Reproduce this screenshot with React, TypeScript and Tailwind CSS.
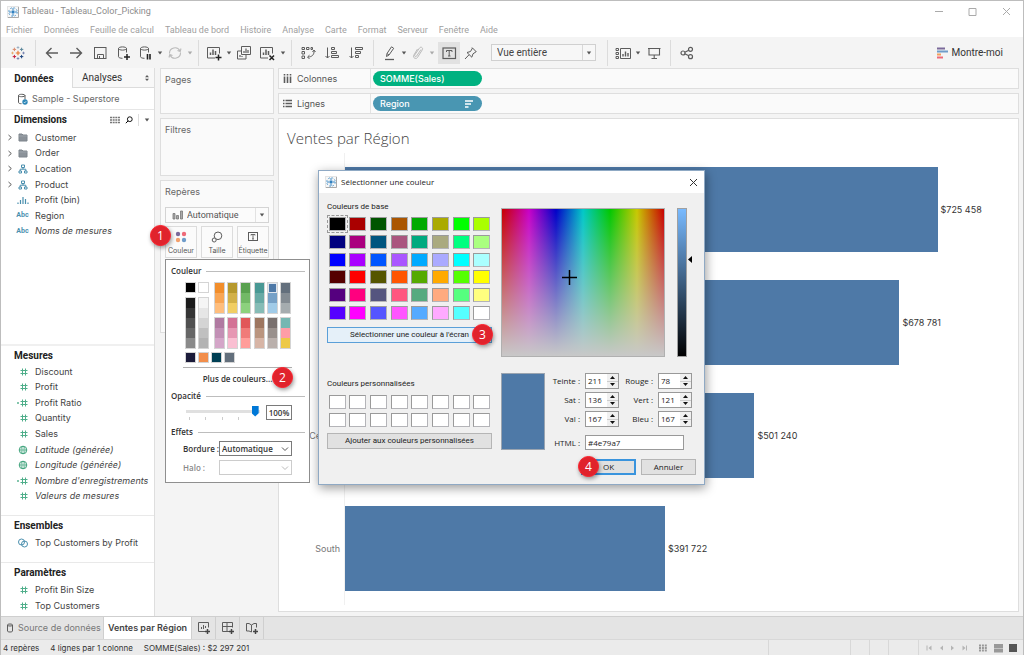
import React from "react";

/* ---------- icons ---------- */

type IconProps = { children: React.ReactNode; className?: string; w?: number; h?: number };

function Icon({ children, className = "text-[#5c5c5c]", w = 16, h = 16 }: IconProps) {
  return (
    <svg
      width={w}
      height={h}
      viewBox={`0 0 ${w} ${h}`}
      fill="none"
      stroke="currentColor"
      strokeWidth="1"
      className={`shrink-0 ${className}`}
      aria-hidden="true"
    >
      {children}
    </svg>
  );
}

function Plus({ x, y, r, c, s = 1 }: { x: number; y: number; r: number; c: string; s?: number }) {
  return <path d={`M${x - r} ${y}H${x + r}M${x} ${y - r}V${y + r}`} stroke={c} strokeWidth={s} />;
}

function Logo() {
  return (
    <Icon w={14} h={14}>
      <Plus x={7} y={7} r={2.2} c="#e8762d" s={1.1} />
      <Plus x={3.4} y={3.4} r={1.7} c="#d98a6c" />
      <Plus x={10.6} y={3.4} r={1.7} c="#5b879b" />
      <Plus x={3.4} y={10.6} r={1.7} c="#c5203f" />
      <Plus x={10.6} y={10.6} r={1.7} c="#1f457e" />
      <Plus x={7} y={1.5} r={1.3} c="#8fa6bd" s={0.8} />
      <Plus x={7} y={12.5} r={1.3} c="#6b77a8" s={0.8} />
      <Plus x={1.5} y={7} r={1.3} c="#e8a15d" s={0.8} />
      <Plus x={12.5} y={7} r={1.3} c="#6b77a8" s={0.8} />
    </Icon>
  );
}

function AppIcon() {
  return (
    <Icon w={12} h={12}>
      <rect x="0.5" y="0.5" width="11" height="11" fill="#f7f7f7" stroke="#e4e4e4" />
      <path d="M11.5 1V11.5H1" stroke="#aaa" />
      <path d="M6 2v8M2 6h8" stroke="#3c8ac6" strokeWidth="1" />
      <circle cx="6" cy="6" r="4.300" stroke="#5c9fd0" strokeWidth="1" strokeDasharray="1.800 1.577" />
      <circle cx="6" cy="6" r="2.300" stroke="#8fbcdf" strokeWidth="0.700" strokeDasharray="1 0.800" />
      <circle cx="6" cy="6" r="1.200" fill="#2f7fc0" stroke="none" />
    </Icon>
  );
}

function Caret({ className = "text-[#555]" }: { className?: string }) {
  return (
    <Icon w={6} h={4} className={className}>
      <path d="M0.8 0.5H5.2L3 3.5Z" fill="currentColor" stroke="none" />
    </Icon>
  );
}

const cylinder = "M2.5 3.5v8.2c0 .9 1.8 1.6 4 1.6M10.5 3.5v4M2.5 3.5c0-.9 1.8-1.6 4-1.6s4 .7 4 1.6-1.8 1.6-4 1.6-4-.7-4-1.6Z";
const miniChart = "M4.5 10V7.5M7 10V4.5M9.5 10V6";

const icons = {
  back: <path d="M14 8H3M7.500 3L2.500 8l5 5" strokeWidth="1.400" />,
  forward: <path d="M2 8h11M8.500 3l5 5-5 5" strokeWidth="1.400" />,
  save: (
    <>
      <rect x="2.500" y="2.500" width="11.500" height="11" />
      <path d="M5.500 13.500v-4h6v4M7.500 13v-2" />
    </>
  ),
  dbPlus: (
    <>
      <path d={cylinder} />
      <path d="M8 12h6M11 9v6" stroke="#222" strokeWidth="1.500" />
    </>
  ),
  dbPause: (
    <>
      <path d={cylinder} />
      <path d="M9.500 9v5.500M12 9v5.500" stroke="#222" strokeWidth="1.600" />
    </>
  ),
  refresh: <path d="M2.500 8.500A5.500 5.500 0 0 1 13 6M13.500 7.500A5.500 5.500 0 0 1 3 10M14 3.500L13.200 6.500 10.500 5.500M2 12.500L2.800 9.500 5.500 10.500" strokeWidth="1.100" />,
  chartPlus: (
    <>
      <path d="M9 13H1.500V2.500H13.500V8.500" />
      <path d={miniChart} strokeWidth="1.500" />
      <path d="M9.500 12.500h6M12.500 9.500v6" stroke="#222" strokeWidth="1.500" />
    </>
  ),
  duplicate: (
    <>
      <path d="M5.500 1.500H14.500V9.500H5.500ZM5.500 6H1.500V14H10V9.500" />
      <path d="M8 8V6M10 8V3.500M12 8V5M4 12V10M6 12v-1" strokeWidth="1.200" />
    </>
  ),
  chartX: (
    <>
      <path d="M9 13H1.500V2.500H13.500V8.500" />
      <path d={miniChart} strokeWidth="1.500" />
      <path d="M10.500 10.500l4.500 4.500M15 10.500l-4.500 4.500" stroke="#222" strokeWidth="1.500" />
    </>
  ),
  swap: (
    <>
      <path d="M2 2.500h2.500v2H2ZM6.500 2.500H9v2H6.500ZM11 2.500h1.500v2H11ZM2 6.500h2.500v2.500H2ZM2 11h2.500v2.500H2Z" />
      <path d="M14 5.500c.5 4-2 6.500-6 6.500M12.500 7L14 5l1.500 2M9.500 10.200L7.500 12l2 2" />
    </>
  ),
  sortAsc: (
    <path d="M3.500 2.500V13M1.500 11l2 2 2-2M7.500 2.500h3v2h-3ZM7.500 6.500h5v2h-5ZM7.500 10.500h7v2h-7Z" />
  ),
  sortDesc: (
    <path d="M3.500 2.500V13M1.500 11l2 2 2-2M7.500 2.500h7v2h-7ZM7.500 6.500h5v2h-5ZM7.500 10.500h3v2h-3Z" />
  ),
  pen: (
    <>
      <path d="M4.500 11.500L5 8.500 9.500 1.800l2.200 1.500L7 10ZM5 8.500L7 10" />
      <path d="M3 14.500H12" strokeWidth="1.300" />
    </>
  ),
  clip: (
    <path d="M11 4.500L6.500 11.200c-.8 1.200-2.500 0-1.800-1.200L9.500 3c1.300-1.800 4-.2 2.800 1.800L7.500 12.500c-1.500 2.200-5 .3-3.800-2.200L7.500 4" />
  ),
  textBox: (
    <>
      <rect x="2" y="3" width="12.500" height="10.500" strokeWidth="1.200" />
      <path d="M5.500 7V5.500h5.500V7M8.200 5.500V11M7 11h2.500" />
    </>
  ),
  pin: (
    <path d="M9 2.500l4.500 4.500M9.500 3L7.500 6.500 4 7.500l4.800 4.700L10 8.800l3-2M6 9.800L2 14" />
  ),
  cards: (
    <>
      <path d="M1 3.500h2.500v2H1ZM1 7.500h2.500v2H1ZM1 11.500h2.500v2H1ZM5.500 3.500H15.500V13.500H5.500Z" />
      <path d="M8 11.500V9M10.500 11.500V6.500M13 11.500V8" strokeWidth="1.400" />
    </>
  ),
  present: <path d="M2 3.500H14.500M3 3.500v6.500H13.500V3.500M8.200 10v3.500M5.500 13.500h5.500" strokeWidth="1.100" />,
  share: (
    <>
      <circle cx="4" cy="8" r="2" strokeWidth="1.200" />
      <circle cx="11.500" cy="4.300" r="2" strokeWidth="1.200" />
      <circle cx="11.500" cy="11.700" r="2" strokeWidth="1.200" />
      <path d="M5.800 7.200l4-2M5.800 8.800l4 2" strokeWidth="1.200" />
    </>
  ),
};

/* ---------- toolbar ---------- */

function Tool({ name, label, cell = "w-6", tone }: { name: keyof typeof icons; label: string; cell?: string; tone?: string }) {
  return (
    <button type="button" aria-label={label} className={`flex h-[22px] shrink-0 items-center justify-center ${cell}`}>
      <Icon className={tone}>{icons[name]}</Icon>
    </button>
  );
}

function DropCaret({ label, tone }: { label: string; tone?: string }) {
  return (
    <button type="button" aria-label={label} className="flex h-[22px] w-2 shrink-0 items-center justify-center">
      <Caret className={tone} />
    </button>
  );
}

function Sep({ className = "mx-1" }: { className?: string }) {
  return <div className={`h-[26px] w-px shrink-0 bg-[#dcdcdc] ${className}`} />;
}

function Toolbar() {
  return (
    <div className="flex h-[31px] items-center bg-[#f4f4f4] font-[Roboto,'Noto_Sans',sans-serif] text-[10px]">
      <div className="flex w-[34px] justify-center">
        <Logo />
      </div>
      <Sep className="mr-1" />
      <Tool name="back" label="Annuler l'action" />
      <Tool name="forward" label="Rétablir" />
      <Tool name="save" label="Enregistrer" />
      <Tool name="dbPlus" label="Nouvelle source de données" />
      <Tool name="dbPause" label="Suspendre les mises à jour" cell="w-5" />
      <DropCaret label="Options de mise à jour" />
      <Tool name="refresh" label="Actualiser" cell="w-[22px]" tone="text-[#bbb]" />
      <DropCaret label="Options d'actualisation" tone="text-[#aaa]" />
      <Sep className="mx-1" />
      <Tool name="chartPlus" label="Nouvelle feuille" cell="w-[22px]" />
      <DropCaret label="Options de nouvelle feuille" />
      <Tool name="duplicate" label="Dupliquer" cell="w-[22px]" />
      <Tool name="chartX" label="Effacer" />
      <DropCaret label="Options d'effacement" />
      <Sep className="mx-1" />
      <Tool name="swap" label="Permuter" />
      <Tool name="sortAsc" label="Tri croissant" />
      <Tool name="sortDesc" label="Tri décroissant" />
      <Sep className="ml-[5px] mr-[6px]" />
      <Tool name="pen" label="Surligner" cell="w-5" />
      <DropCaret label="Options de surlignage" />
      <Tool name="clip" label="Grouper" cell="w-5" tone="text-[#bbb]" />
      <DropCaret label="Options de groupe" tone="text-[#aaa]" />
      <button type="button" aria-label="Étiquettes de repère" className="ml-[2px] flex h-[22px] w-[22px] shrink-0 items-center justify-center bg-[#e2e2e2]">
        <Icon>{icons.textBox}</Icon>
      </button>
      <Tool name="pin" label="Fixer les axes" cell="w-[22px]" />
      <div className="relative ml-[9px] w-[105px] shrink-0">
        <select aria-label="Ajuster" className="h-[17px] w-full appearance-none border border-[#d0d0d0] bg-[#f7f7f7] pl-[5px] text-[10px] leading-[15px] text-[#444]">
          <option>Vue entière</option>
        </select>
        <span className="pointer-events-none absolute inset-y-px right-px flex w-[13px] items-center justify-center border-l border-[#d8d8d8]">
          <Caret />
        </span>
      </div>
      <Sep className="ml-[11px] mr-1" />
      <Tool name="cards" label="Afficher/Masquer les fiches" cell="w-[22px]" />
      <DropCaret label="Options de fiches" />
      <Tool name="present" label="Mode Présentation" />
      <Sep className="mx-1" />
      <Tool name="share" label="Partager" />
      <button type="button" className="ml-auto mr-5 flex items-center gap-1 text-[10px] text-[#333]">
        <Icon w={11} h={12}>
          <path d="M0 1.500H8" stroke="#7b6a9a" strokeWidth="2" />
          <path d="M0 4.500H11" stroke="#6f9cc9" strokeWidth="2" />
          <path d="M0 7.500H4" stroke="#f3a05c" strokeWidth="2" />
          <path d="M0 10.500H6" stroke="#ee6a78" strokeWidth="2" />
        </Icon>
        Montre-moi
      </button>
    </div>
  );
}

/* ---------- data pane ---------- */

type FieldKind = "folder" | "hier" | "bin" | "abc" | "num" | "calc" | "globe" | "set";

function FieldIcon({ kind }: { kind: FieldKind }) {
  if (kind === "abc") return <span className="font-[Roboto,sans-serif] text-[7px] font-bold text-[#4a8fae]">Abc</span>;
  if (kind === "folder")
    return (
      <Icon w={10} h={9}>
        <path d="M1 1h3l1 1h4v6H1Z" fill="#8b9299" stroke="#7d848b" />
        <path d="M1 3H9" stroke="#a9afb5" strokeWidth="0.600" />
      </Icon>
    );
  if (kind === "hier")
    return (
      <Icon w={10} h={10} className="text-[#4a8fae]">
        <path d="M3.500 1h3v2.500h-3ZM1 7h2.500v2H1ZM6.500 7H9v2H6.500ZM5 3.500V5.200M2.200 7V5.200H7.800V7" />
      </Icon>
    );
  if (kind === "bin")
    return (
      <Icon w={12} h={10} className="text-[#4a8fae]">
        <path d="M1 9V7.500M3.500 9V5M6 9V2M8.500 9V4M11 9V7.500" strokeWidth="1.200" />
      </Icon>
    );
  if (kind === "globe")
    return (
      <Icon w={10} h={10} className="text-[#3fa37c]">
        <circle cx="5" cy="5" r="3.800" />
        <path d="M1 5H9M5 1V9" strokeWidth="0.700" />
        <ellipse cx="5" cy="5" rx="2" ry="3.800" strokeWidth="0.700" />
      </Icon>
    );
  if (kind === "set")
    return (
      <Icon w={12} h={10} className="text-[#4a8fae]">
        <circle cx="4.500" cy="4" r="3" />
        <circle cx="7.500" cy="6" r="3" />
      </Icon>
    );
  return (
    <Icon w={12} h={8} className="text-[#4fae8a]">
      <path d="M5.500 0.500V7.500M8.500 0.500V7.500M3.500 2.500H10.500M3.500 5.500H10.500" />
      {kind === "calc" && <path d="M0 3.500H2M0 4.500H2" strokeWidth="0.700" />}
    </Icon>
  );
}

type FieldDef = { name: string; kind: FieldKind; open?: boolean; italic?: boolean };

function Field({ name, kind, open, italic }: FieldDef) {
  return (
    <li className="flex flex-1 items-center">
      <span className="flex w-3 shrink-0 justify-end">
        {open && (
          <Icon w={6} h={7}>
            <path d="M1.500 1L4.300 3.500 1.500 6" />
          </Icon>
        )}
      </span>
      <span className="flex w-[22px] shrink-0 justify-center pr-[3px]">
        <FieldIcon kind={kind} />
      </span>
      <span className={`whitespace-nowrap leading-3 text-[#444] ${italic ? "italic" : ""}`}>{name}</span>
    </li>
  );
}

const dimensions: FieldDef[] = [
  { name: "Customer", kind: "folder", open: true },
  { name: "Order", kind: "folder", open: true },
  { name: "Location", kind: "hier", open: true },
  { name: "Product", kind: "hier", open: true },
  { name: "Profit (bin)", kind: "bin" },
  { name: "Region", kind: "abc" },
  { name: "Noms de mesures", kind: "abc", italic: true },
];

const measures: FieldDef[] = [
  { name: "Discount", kind: "num" },
  { name: "Profit", kind: "num" },
  { name: "Profit Ratio", kind: "calc" },
  { name: "Quantity", kind: "num" },
  { name: "Sales", kind: "num" },
  { name: "Latitude (générée)", kind: "globe", italic: true },
  { name: "Longitude (générée)", kind: "globe", italic: true },
  { name: "Nombre d'enregistrements", kind: "calc", italic: true },
  { name: "Valeurs de mesures", kind: "num", italic: true },
];

function PaneTitle({ children }: { children: React.ReactNode }) {
  return <h2 className="pl-[13px] font-[Roboto,'Noto_Sans',sans-serif] text-[10px] font-bold leading-5 text-[#222]">{children}</h2>;
}

function DataPane() {
  return (
    <aside className="flex w-[154px] shrink-0 flex-col border-r border-[#dedede] bg-white">
      <div className="flex h-5 font-[Roboto,'Noto_Sans',sans-serif] text-[10px]">
        <button type="button" className="w-[71px] pr-[5px] text-center font-bold text-[#222]">
          Données
        </button>
        <button type="button" className="flex flex-1 items-center justify-between border-b border-l border-[#dcdcdc] bg-[#f8f8f8] pl-[9px] pr-1 text-[#333]">
          Analyses
          <Icon w={6} h={8}>
            <path d="M1 3.200L3 1l2 2.200ZM1 4.800L3 7l2-2.200Z" fill="currentColor" stroke="none" />
          </Icon>
        </button>
      </div>
      <div className="flex h-[22px] items-center gap-[3px] border-b border-[#e6e6e6] pl-4 text-[#666]">
        <Icon w={12} h={12}>
          <path d="M1.500 2.500v7c0 .7 1.300 1.200 3 1.200M8 2.500v4M1.500 2.500c0-.7 1.400-1.200 3.200-1.200S8 1.800 8 2.500 6.500 3.700 4.700 3.700 1.500 3.200 1.500 2.500Z" />
          <circle cx="8" cy="9" r="2.700" fill="#2f87b7" stroke="none" />
          <path d="M6.800 9l.9.9 1.500-1.700" stroke="#fff" strokeWidth="0.700" />
        </Icon>
        Sample - Superstore
      </div>
      <div className="flex items-center pr-[4px]">
        <PaneTitle>Dimensions</PaneTitle>
        <Icon w={10} h={8} className="ml-auto text-[#777]">
          <path d="M0 1.500H10M0 4H10M0 6.500H10" strokeWidth="1.500" strokeDasharray="2 0.660" />
        </Icon>
        <Icon w={8} h={8} className="ml-[5px]">
          <circle cx="4.800" cy="3.200" r="2.400" strokeWidth="0.900" />
          <path d="M3.100 4.900L0.800 7.200" strokeWidth="1" />
        </Icon>
        <span className="ml-[5px] mr-[5px] h-[12px] w-px bg-[#ddd]" />
        <Caret />
      </div>
      <ul className="flex h-[109px] flex-col">
        {dimensions.map((f) => (
          <Field key={f.name} {...f} />
        ))}
      </ul>
      <div className="mt-auto border-t-2 border-[#f0f0f0]">
        <PaneTitle>Mesures</PaneTitle>
        <ul className="-mt-[2px] flex h-[140px] flex-col">
          {measures.map((f) => (
            <Field key={f.name} {...f} />
          ))}
        </ul>
      </div>
      <div className="mt-[11px] border-t border-[#e9e9e9]">
        <PaneTitle>Ensembles</PaneTitle>
        <ul className="-mt-px flex h-4 flex-col">
          <Field name="Top Customers by Profit" kind="set" />
        </ul>
      </div>
      <div className="mt-[11px] border-t border-[#e9e9e9]">
        <PaneTitle>Paramètres</PaneTitle>
        <ul className="-mt-px mb-[2px] flex h-8 flex-col">
          <Field name="Profit Bin Size" kind="num" />
          <Field name="Top Customers" kind="num" />
        </ul>
      </div>
    </aside>
  );
}

/* ---------- cards ---------- */

function Badge({ n, className }: { n: number; className: string }) {
  return (
    <span className={`absolute z-20 flex h-[21px] w-[21px] items-center justify-center rounded-full border border-[#ff1f2a] bg-[#e0232c] font-['Open_Sans',sans-serif] text-[12px] font-normal leading-none text-white shadow-[1px_2px_4px_rgba(0,0,0,0.4)] ${className}`}>
      {n}
    </span>
  );
}

function MarkButton({ label, children }: { label: string; children: React.ReactNode }) {
  return (
    <button type="button" className="flex h-8 w-8 flex-col items-center justify-between border border-[#dcdcdc] bg-[#fbfbfb] pb-px pt-1 text-[7px] leading-[10px] text-[#555]">
      {children}
      {label}
    </button>
  );
}

function Cards() {
  return (
    <div className="flex w-[119px] shrink-0 flex-col gap-1 pl-[5px] leading-3 text-[#666]">
      <section className="h-[46px] border border-[#dedede] bg-[#fafafa] px-1 pt-[5px]">Pages</section>
      <section className="h-[58px] border border-[#dedede] bg-[#fafafa] px-1 pt-[5px]">Filtres</section>
      <section className="relative h-[153px] border border-[#dedede] bg-[#fafafa] px-1 pt-[5px]">
        Repères
        <div className="relative mt-[9px]">
          <select aria-label="Type de repère" className="h-4 w-full appearance-none border border-[#d4d4d4] bg-[#fbfbfb] pl-[21px] font-[Roboto,sans-serif] text-[9px] leading-[14px] text-[#555]">
            <option>Automatique</option>
          </select>
          <span className="pointer-events-none absolute inset-y-0 left-[7px] flex items-center">
            <Icon w={11} h={10} className="text-[#777]">
              <path d="M1 3.500h2V9H1ZM4.500 5.500h2V9h-2ZM8.500 1h2v8h-2Z" fill="#aaa" strokeWidth="0.800" />
            </Icon>
          </span>
          <span className="pointer-events-none absolute inset-y-px right-px flex w-[13px] items-center justify-center border-l border-[#e2e2e2]">
            <Caret />
          </span>
        </div>
        <div className="mt-[3px] flex justify-between">
          <MarkButton label="Couleur">
            <Icon w={12} h={12}>
              <circle cx="3" cy="3" r="2.200" fill="#7b6a9a" stroke="none" />
              <circle cx="9" cy="3" r="2.200" fill="#ee6a78" stroke="none" />
              <circle cx="3" cy="9" r="2.200" fill="#f3a06c" stroke="none" />
              <circle cx="9" cy="9" r="2.200" fill="#6f9cc9" stroke="none" />
            </Icon>
          </MarkButton>
          <MarkButton label="Taille">
            <Icon w={12} h={12}>
              <circle cx="7" cy="4.800" r="3.800" />
              <circle cx="3.200" cy="9" r="2" fill="#fbfbfb" />
            </Icon>
          </MarkButton>
          <MarkButton label="Étiquette">
            <Icon w={12} h={12}>
              <rect x="1.500" y="1.500" width="9" height="8" />
              <path d="M4 4.500V3.500H8V4.500M6 3.500V8M5 8H7" strokeWidth="0.900" />
            </Icon>
          </MarkButton>
        </div>
        <Badge n={1} className="-left-[11px] top-[44px]" />
      </section>
    </div>
  );
}

/* ---------- worksheet ---------- */

type Row = { value: number; text: string; region?: string };

const rows: Row[] = [
  { value: 725458, text: "$725 458" },
  { value: 678781, text: "$678 781" },
  { value: 501240, text: "$501 240", region: "Central" },
  { value: 391722, text: "$391 722", region: "South" },
];
const axisMax = 824000;

function Shelf({ label, icon, children }: { label: string; icon: React.ReactNode; children: React.ReactNode }) {
  return (
    <div className="flex h-[21px] items-center border border-[#dedede] bg-[#fafafa]">
      <div className="flex h-full w-[92px] shrink-0 items-center gap-[5px] border-r border-[#e2e2e2] pl-1 text-[#555]">
        {icon}
        {label}
      </div>
      {children}
    </div>
  );
}

function Sheet() {
  return (
    <main className="mb-1 ml-1 mr-1 flex min-w-0 flex-1 flex-col gap-1">
      <Shelf
        label="Colonnes"
        icon={
          <Icon w={9} h={9}>
            <path d="M1.500 2.500V9M4.500 2.500V9M7.500 2.500V9M1.500 0V1.500M4.500 0V1.500M7.500 0V1.500" strokeWidth="1.600" />
          </Icon>
        }
      >
        <span className="ml-[2px] flex h-[15px] w-[109px] items-center rounded-full bg-[#00b180] px-[7px] font-medium text-white">
          SOMME(Sales)
        </span>
      </Shelf>
      <Shelf
        label="Lignes"
        icon={
          <Icon w={9} h={9}>
            <path d="M0 1.500H1.500M0 4.500H1.500M0 7.500H1.500M2.500 1.500H9M2.500 4.500H9M2.500 7.500H9" strokeWidth="1.600" />
          </Icon>
        }
      >
        <span className="ml-[2px] flex h-[15px] w-[109px] items-center justify-between rounded-full bg-[#4996b2] pl-[7px] pr-[9px] font-medium text-white">
          Region
          <Icon w={8} h={8} className="text-white">
            <path d="M0 1H8M0 4H6M0 7H3.500" strokeWidth="1.400" />
          </Icon>
        </span>
      </Shelf>
      <section className="flex flex-1 flex-col border border-[#dedede] bg-white pb-[6px]">
        <h1 className="pl-2 pt-[9px] font-['Open_Sans','Noto_Sans',sans-serif] text-[15px] font-light leading-5 text-[#444]">Ventes par Région</h1>
        <div className="mt-[5px] flex flex-1 flex-col">
          {rows.map((r) => (
            <div key={r.value} className="flex flex-1 text-[#777]">
              <div className="flex w-[66px] shrink-0 items-center justify-end border-r border-[#f0f0f0] pr-1">{r.region}</div>
              <div className="flex flex-1 items-center gap-[3px] py-[14px] text-[#333]">
                <div className="h-full bg-[#4e79a7]" style={{ width: `${(r.value / axisMax) * 100}%` }} />
                {r.text}
              </div>
            </div>
          ))}
        </div>
      </section>
    </main>
  );
}

/* ---------- colour popup ---------- */

function Ramp({ colors }: { colors: string[] }) {
  return (
    <div className="flex w-[11px] flex-col border border-[#d4d4d4]">
      {colors.map((c, i) => (
        <span
          key={i}
          className={`h-[10px] ${c === "#4e79a7" ? "border border-[#dfe6ee]" : ""}`}
          style={{ background: c }}
        />
      ))}
    </div>
  );
}

function Swatch({ color }: { color: string }) {
  return <span className="block h-[11px] w-[11px] border border-[#d4d4d4]" style={{ background: color }} />;
}

const rampsTop = [
  ["#f28e2b", "#f9a655", "#ffbe7d"],
  ["#b6992d", "#d2b148", "#f1ce63"],
  ["#59a14f", "#72b966", "#8cd17d"],
  ["#499894", "#68aaa5", "#86bcb6"],
  ["#4e79a7", "#76a1c7", "#a0cbe8"],
  ["#636f7c", "#838b92", "#a5acaf"],
];
const rampsBottom = [
  ["#b07aa1", "#c290b5", "#d4a6c8"],
  ["#d37295", "#e697b3", "#fabfd2"],
  ["#e15759", "#f07b79", "#ff9d9a"],
  ["#9d7660", "#ba957f", "#d7b5a6"],
  ["#79706e", "#99908c", "#bab0ac"],
  ["#76b7b2", "#ff9da7", "#edc948"],
];

function Legend({ children }: { children: string }) {
  return (
    <div className="flex items-center gap-[5px] pl-[5px] pr-1 leading-3">
      {children}
      <span className="h-px flex-1 bg-[#bdbdbd]" />
    </div>
  );
}

function ColorPopup() {
  return (
    <div className="absolute left-[164px] top-[258px] z-10 flex h-[224px] w-[145px] flex-col border border-[#8f8f8f] bg-white pt-[5px] font-['Open_Sans','Noto_Sans',sans-serif] text-[8px] font-semibold text-[#333]">
      <Legend>Couleur</Legend>
      <div className="ml-[19px] mt-[5px] flex w-[106px] justify-between">
        <div className="flex gap-[2px]">
          <div className="flex flex-col justify-between">
            <Swatch color="#000" />
            <Ramp colors={["#1b1b1b", "#353535", "#505050", "#666666", "#8a8a8a"]} />
          </div>
          <div className="flex flex-col justify-between">
            <Swatch color="#fff" />
            <Ramp colors={["#f5f5f5", "#e6e6e6", "#d4d4d4", "#c0c0c0", "#b3b3b3"]} />
          </div>
        </div>
        <div className="flex w-[77px] flex-col gap-[3px]">
          <div className="flex justify-between">
            {rampsTop.map((r, i) => (
              <Ramp key={i} colors={r} />
            ))}
          </div>
          <div className="flex justify-between">
            {rampsBottom.map((r, i) => (
              <Ramp key={i} colors={r} />
            ))}
          </div>
        </div>
      </div>
      <div className="ml-[19px] mt-[3px] flex gap-[2px]">
        {["#1b1b3a", "#f28e4b", "#003f54", "#636f7c"].map((c) => (
          <Swatch key={c} color={c} />
        ))}
      </div>
      <div className="relative mx-[17px] mt-1 border-t border-[#b0b0b0] pt-[5px]">
        <button type="button" className="block w-full leading-3">
          Plus de couleurs...
        </button>
        <Badge n={2} className="-right-[1px] -top-px" />
      </div>
      <div className="mt-[5px]">
        <Legend>Opacité</Legend>
      </div>
      <div className="mt-[3px] flex items-center justify-between pl-5 pr-[17px]">
        <div className="w-[74px]">
          <input
            type="range"
            aria-label="Opacité"
            defaultValue={98}
            className="block h-3 w-full appearance-none bg-transparent [&::-webkit-slider-runnable-track]:h-[3px] [&::-webkit-slider-runnable-track]:bg-[#e0e0e0] [&::-webkit-slider-thumb]:-mt-1 [&::-webkit-slider-thumb]:h-[11px] [&::-webkit-slider-thumb]:w-[7px] [&::-webkit-slider-thumb]:appearance-none [&::-webkit-slider-thumb]:bg-[#0078d7] [&::-webkit-slider-thumb]:[clip-path:polygon(0_0,100%_0,100%_70%,50%_100%,0_70%)]"
          />
          <div className="flex justify-between pl-[3px] pr-[5px]">
            {[0, 1, 2, 3, 4].map((t) => (
              <span key={t} className={`h-[3px] w-px ${t < 4 ? "bg-[#ccc]" : ""}`} />
            ))}
          </div>
        </div>
        <input aria-label="Opacité en pourcentage" defaultValue="100%" className="h-[15px] w-[26px] border border-[#7a7a7a] bg-white text-center text-[8px] font-semibold" />
      </div>
      <div className="mt-[6px]">
        <Legend>Effets</Legend>
      </div>
      <div className="mt-[3px] flex items-center justify-between pl-[17px] pr-[17px]">
        <label htmlFor="border">Bordure :</label>
        <div className="relative w-[73px]">
          <select id="border" className="block h-[15px] w-full appearance-none border border-[#7a7a7a] bg-white pl-[2px] text-[8px] leading-[13px]">
            <option>Automatique</option>
          </select>
          <Icon w={8} h={6} className="pointer-events-none absolute right-[3px] top-[5px] text-[#555]">
            <path d="M1 1.500L4 4.500 7 1.500" />
          </Icon>
        </div>
      </div>
      <div className="mt-1 flex items-center justify-between pl-[17px] pr-[17px] text-[#888]">
        <label htmlFor="halo">Halo :</label>
        <div className="relative w-[73px]">
          <select id="halo" disabled className="block h-[15px] w-full appearance-none border border-[#ccc] bg-white text-[8px]">
            <option></option>
          </select>
          <Icon w={8} h={6} className="pointer-events-none absolute right-[3px] top-[5px] text-[#bbb]">
            <path d="M1 1.500L4 4.500 7 1.500" />
          </Icon>
        </div>
      </div>
    </div>
  );
}

/* ---------- colour dialog ---------- */

const baseColors = [
  "#000000", "#aa0000", "#005500", "#aa5500", "#00aa00", "#aaaa00", "#00ff00", "#aaff00",
  "#00007f", "#aa007f", "#00557f", "#aa557f", "#00aa7f", "#aaaa7f", "#00ff7f", "#aaff7f",
  "#0000ff", "#aa00ff", "#0055ff", "#aa55ff", "#00aaff", "#aaaaff", "#00ffff", "#aaffff",
  "#550000", "#ff0000", "#555500", "#ff5500", "#55aa00", "#ffaa00", "#55ff00", "#ffff00",
  "#55007f", "#ff007f", "#55557f", "#ff557f", "#55aa7f", "#ffaa7f", "#55ff7f", "#ffff7f",
  "#5500ff", "#ff00ff", "#5555ff", "#ff55ff", "#55aaff", "#ffaaff", "#55ffff", "#ffffff",
];

function ColorCell({ color, selected }: { color: string; selected?: boolean }) {
  return (
    <span className={`flex items-center justify-center ${selected ? "outline-1 outline-dashed outline-[#999] -outline-offset-1" : ""}`}>
      <button type="button" aria-label={color} className="h-[14px] w-[17px] border border-t-[#9a9a9a] border-l-[#9a9a9a] border-b-[#b4b4b8] border-r-[#b4b4b8]" style={{ background: color }} />
    </span>
  );
}

function Spin({ id, label, value }: { id: string; label: string; value: number }) {
  return (
    <>
      <label htmlFor={id} className="pr-[5px] text-right">
        {label}
      </label>
      <div className="flex h-4 w-[34px] border border-[#999] bg-white">
        <input id={id} defaultValue={value} className="w-[21px] bg-white pl-[2px]" />
        <div className="flex flex-1 flex-col bg-[#f0f0f0]">
          <button type="button" aria-label={`${label} plus`} className="flex flex-1 items-center justify-center border-b border-[#ccc]">
            <Icon w={5} h={3} className="text-[#111]">
              <path d="M0 3L2.500 0 5 3Z" fill="currentColor" stroke="none" />
            </Icon>
          </button>
          <button type="button" aria-label={`${label} moins`} className="flex flex-1 items-center justify-center">
            <Icon w={5} h={3} className="text-[#111]">
              <path d="M0 0L2.500 3 5 0Z" fill="currentColor" stroke="none" />
            </Icon>
          </button>
        </div>
      </div>
    </>
  );
}

function ColorDialog() {
  return (
    <div
      role="dialog"
      aria-label="Sélectionner une couleur"
      className="absolute left-[317px] top-[169px] z-20 w-[387px] border border-[#8fa9c4] bg-[#f0f0f0] font-['Open_Sans','Noto_Sans',sans-serif] text-[8px] text-[#222] shadow-[1px_3px_10px_rgba(0,0,0,0.4)]"
    >
      <div className="flex h-[22px] items-center bg-white pl-[6px] pr-[6px]">
        <AppIcon />
        <span className="ml-1">Sélectionner une couleur</span>
        <button type="button" aria-label="Fermer" className="ml-auto">
          <Icon w={9} h={9} className="text-[#333]">
            <path d="M1 1L8 8M8 1L1 8" />
          </Icon>
        </button>
      </div>
      <div className="flex gap-[9px] pb-[9px] pl-2 pr-2 pt-2">
        <div className="flex w-[165px] flex-col font-[Roboto,'Noto_Sans',sans-serif]">
          <div className="leading-3">Couleurs de base</div>
          <div className="mt-[2px] grid h-[107px] grid-cols-8 grid-rows-6">
            {baseColors.map((c, i) => (
              <ColorCell key={c} color={c} selected={i === 0} />
            ))}
          </div>
          <div className="relative mt-[5px]">
            <button type="button" className="block h-4 w-full border border-[#5a9fd8] bg-[#e5f0f9]">Sélectionner une couleur à l'écran</button>
            <Badge n={3} className="-right-px -top-[3px]" />
          </div>
          <div className="mt-[35px] leading-3">Couleurs personnalisées</div>
          <div className="mt-[3px] grid h-9 grid-cols-8 grid-rows-2">
            {Array.from({ length: 16 }, (_, i) => (
              <ColorCell key={i} color="#ffffff" />
            ))}
          </div>
          <button type="button" className="mt-1 h-4 w-full border border-[#b5b5b5] bg-[#e1e1e1]">Ajouter aux couleurs personnalisées</button>
        </div>
        <div className="flex flex-1 flex-col pt-[7px]">
          <div className="flex">
            <div className="relative h-[149px] w-[164px] border border-[#b0b0b0] bg-[linear-gradient(to_bottom,rgba(200,200,200,0),rgb(200,200,200)),linear-gradient(to_right,#c80000,#c800c8,#0000c8,#00c8c8,#00c800,#c8c800,#c80000)]">
              <svg width="15" height="15" viewBox="0 0 15 15" className="absolute left-[60px] top-[61px]" aria-hidden="true">
                <path d="M7.500 0V15M0 7.500H15" stroke="#000" strokeWidth="1.500" />
              </svg>
            </div>
            <div className="ml-3 h-[149px] w-[10px] border border-[#a0a0a0] bg-[linear-gradient(to_bottom,#78baff,#000)]" />
            <svg width="4" height="7" viewBox="0 0 4 7" className="ml-px mt-12" aria-hidden="true">
              <path d="M0 3.500L4 0V7Z" fill="#000" />
            </svg>
          </div>
          <div className="mt-4 flex">
            <div className="h-[77px] w-[44px] border border-[#9aa4b0] bg-[#4e79a7]" />
            <div className="flex flex-1 flex-col justify-between">
              <div className="grid grid-cols-[40px_34px_39px_34px] items-center gap-y-[3px]">
                <Spin id="hue" label="Teinte : " value={211} />
                <Spin id="red" label="Rouge : " value={78} />
                <Spin id="sat" label="Sat : " value={136} />
                <Spin id="green" label="Vert : " value={121} />
                <Spin id="val" label="Val : " value={167} />
                <Spin id="blue" label="Bleu : " value={167} />
              </div>
              <div className="grid grid-cols-[40px_99px] items-center">
                <label htmlFor="html" className="pr-[5px] text-right">
                  HTML :
                </label>
                <input id="html" defaultValue="#4e79a7" className="h-[15px] w-full border border-[#999] bg-white px-[2px]" />
              </div>
            </div>
          </div>
          <div className="relative mt-[9px] flex justify-end gap-[5px]">
            <button type="button" className="h-4 w-[55px] border-2 border-[#3a94dd] bg-[#e1e1e1]">OK</button>
            <button type="button" className="h-4 w-[55px] border border-[#b5b5b5] bg-[#e1e1e1]">Annuler</button>
            <Badge n={4} className="right-[97px] -top-[3px]" />
          </div>
        </div>
      </div>
    </div>
  );
}

/* ---------- bottom bars ---------- */

function SheetTabs() {
  return (
    <nav className="flex h-[23px] border-t border-[#cfcfcf] bg-[#e4e4e4] text-[#777]">
      <button type="button" className="flex w-[103px] items-center gap-1 whitespace-nowrap border-r border-[#cfcfcf] pl-[5px]">
        <Icon w={8} h={10}>
          <path d="M1.500 2v6c0 .6 1 1 2.500 1s2.500-.4 2.500-1V2M1.500 2c0-.6 1-1 2.500-1s2.500.4 2.500 1-1 1-2.500 1-2.500-.4-2.500-1Z" />
        </Icon>
        Source de données
      </button>
      <button type="button" className="w-[88px] whitespace-nowrap border-r border-[#cfcfcf] bg-white font-semibold text-[#444]">Ventes par Région</button>
      {[
        ["Nouvelle feuille de calcul", "M8 10.500H1.500V1.500H11.500V6.500M4.500 8V6M6.500 8V4M8.500 7V5"],
        ["Nouveau tableau de bord", "M8 10.500H1.500V1.500H11.500V6.500M1.500 5.500H11.500M6 1.500V10.500"],
        ["Nouvelle histoire", "M1.500 2.500H4L6.500 4 9 2.500H11.500V6.500M1.500 2.500V10H4l2.500 1M6.500 4V11"],
      ].map(([label, d]) => (
        <button key={label} type="button" aria-label={label} className="flex w-6 items-center justify-center border-r border-[#cfcfcf]">
          <Icon w={14} h={14}>
            <path d={d} />
            <path d="M8 10.500H13M10.500 8V13" strokeWidth="1.500" stroke="#444" />
          </Icon>
        </button>
      ))}
    </nav>
  );
}

function StatusBar() {
  return (
    <footer className="flex h-4 items-center border-t border-[#d8d8d8] bg-[#ebebeb] pl-[2px] text-[8px] text-[#333]">
      <span>4 repères</span>
      <span className="ml-[11px]">4 lignes par 1 colonne</span>
      <span className="ml-[11px]">SOMME(Sales) : $2 297 201</span>
      <div className="ml-auto mr-[5px] flex h-full items-center">
        <span className="mr-[81px] h-full w-px bg-[#d8d8d8]" />
        <span className="mr-[18px] h-full w-px bg-[#d8d8d8]" />
        <span className="mr-[18px] h-full w-px bg-[#d8d8d8]" />
        <span className="mr-[29px] h-full w-px bg-[#d8d8d8]" />
        <span className="mr-[7px] h-full w-px bg-[#d8d8d8]" />
        <Icon w={42} h={8} className="text-[#b5b5b5]">
          <path d="M1 1.500V6.500M40.500 1.500V6.500" />
          <path d="M5.500 1.500V6.500L2.500 4ZM17 1.500V6.500L14 4ZM25 1.500V6.500L28 4ZM36.500 1.500V6.500L39.500 4Z" fill="currentColor" stroke="none" />
        </Icon>
        <Icon w={40} h={10} className="ml-[10px] text-[#999]">
          <path d="M1 2.500H9M1 5H9M1 7.500H9" strokeWidth="2" strokeDasharray="2 0.900" />
          <path d="M16 3H25M16 7.500H25" strokeWidth="4" strokeDasharray="9 1" />
          <rect x="31" y="1" width="8" height="8" fill="#555" stroke="none" />
        </Icon>
      </div>
    </footer>
  );
}

export default function App() {
  return (
    <div className="relative flex min-h-screen flex-col border-l border-r border-t border-[#bdbdbd] bg-[#f4f4f4] font-[Inter,'Noto_Sans',sans-serif] text-[9px]">
      <header className="flex h-[21px] items-center bg-white pl-[6px] pr-3 font-[Roboto,'Noto_Sans',sans-serif] text-[#8c8c8c]">
        <AppIcon />
        <span className="ml-[3px]">Tableau - Tableau_Color_Picking</span>
        <div className="ml-auto flex items-center gap-[25px]">
          <button type="button" aria-label="Réduire">
            <Icon w={8} h={9} className="text-[#aaa]">
              <path d="M0 4.500H8" />
            </Icon>
          </button>
          <button type="button" aria-label="Agrandir">
            <Icon w={9} h={9} className="text-[#aaa]">
              <path d="M1 1.500H8V8.500H1Z" />
            </Icon>
          </button>
          <button type="button" aria-label="Fermer la fenêtre">
            <Icon w={9} h={9} className="text-[#aaa]">
              <path d="M1 1L8 8M8 1L1 8" />
            </Icon>
          </button>
        </div>
      </header>
      <nav className="flex h-[15px] items-center gap-[11px] bg-white pl-[5px] pt-[3px] font-[Roboto,'Noto_Sans',sans-serif] text-[#a0a0a0]">
        {["Fichier", "Données", "Feuille de calcul", "Tableau de bord", "Histoire", "Analyse", "Carte", "Format", "Serveur", "Fenêtre", "Aide"].map((m) => (
          <a key={m} href="#">
            {m}
          </a>
        ))}
      </nav>
      <Toolbar />
      <div className="flex flex-1">
        <DataPane />
        <Cards />
        <Sheet />
      </div>
      <SheetTabs />
      <StatusBar />
      <ColorPopup />
      <ColorDialog />
    </div>
  );
}
